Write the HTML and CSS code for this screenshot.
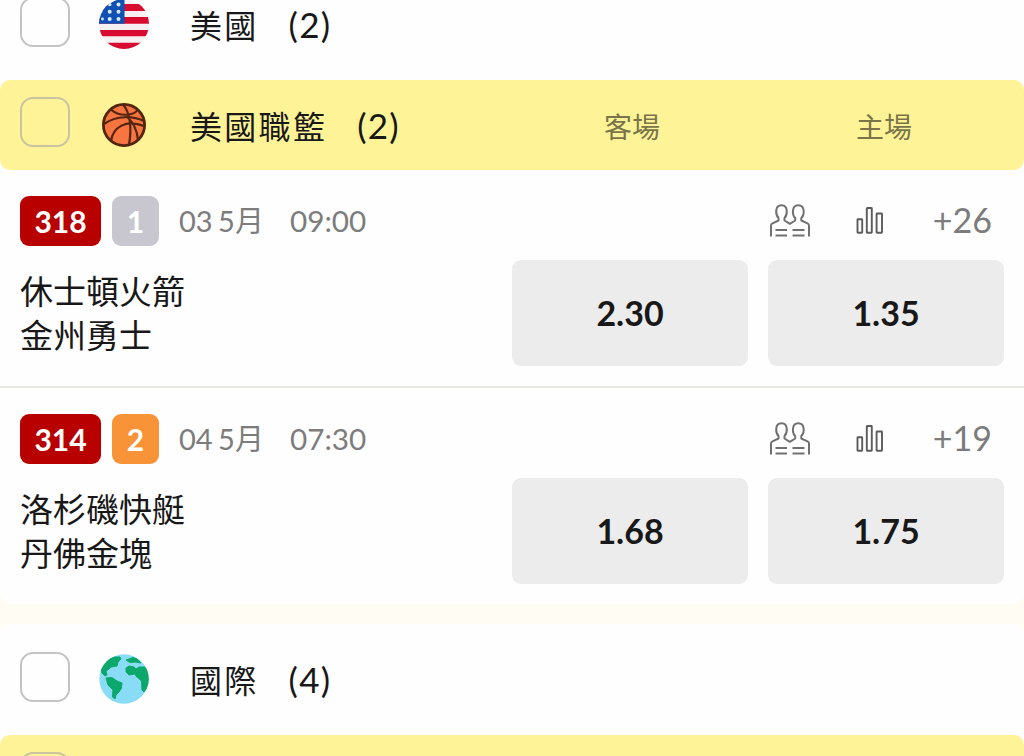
FILE: index.html
```html
<!DOCTYPE html>
<html lang="zh-Hant">
<head>
  <meta charset="UTF-8">
  <title>美國職籃</title>
  <meta name="viewport" content="width=device-width, initial-scale=1.0">
  <link rel="stylesheet" href="styles.css">
</head>
<body>
  <!-- shared match icons -->
  <svg class="sprite" width="0" height="0">
    <symbol id="people" viewBox="0 0 42 36">
      <g fill="none" stroke="#707070" stroke-width="2" stroke-linejoin="round">
        <path d="M2 33.500V22.500Q2 21 3.500 20.300L9.500 17.500V15C6.500 12 5.500 2.300 12.500 2.300S18.500 12 15.500 15V17.500L20.800 20.800L26.200 17.500V15C23.200 12 22.300 2.300 29.300 2.300S35.500 12 32.300 15V17.500L38.500 20.300Q40 21 40 22.500V33.500"/>
        <path d="M6.500 27H18M6.500 32.500H18M23.500 27H35.500M23.500 32.500H35.500"/>
      </g>
    </symbol>
    <symbol id="stats" viewBox="0 0 28 28">
      <g fill="none" stroke="#5c5c5c" stroke-width="1.900">
        <rect x="1.500" y="12.300" width="4.700" height="13.400" rx=".5"/>
        <rect x="10.800" y="1" width="5" height="24.700" rx=".5"/>
        <rect x="20.600" y="6.500" width="5.400" height="19.200" rx=".5"/>
      </g>
    </symbol>
  </svg>

  <section class="region region-first">
    <div class="region-header">
      <span class="checkbox"></span>
      <svg class="region-icon" viewBox="0 0 50 50">
        <clipPath id="round"><circle cx="25" cy="25" r="25"/></clipPath>
        <g clip-path="url(#round)">
          <rect width="50" height="50" fill="#f7f0f3"/>
          <path fill="#d80b30" d="M0 5H50V12H0ZM0 18H50V24.700H0ZM0 31H50V37.300H0ZM0 43.700H50V50H0Z"/>
          <rect width="25.500" height="24.700" fill="#0f52b4"/>
          <g fill="#dce8f8">
            <circle cx="19.500" cy="5.500" r="2"/><circle cx="19.500" cy="12.700" r="2"/><circle cx="19.500" cy="20" r="2"/>
            <circle cx="10.700" cy="5.500" r="1.800"/><circle cx="10.700" cy="12.700" r="2"/><circle cx="10.700" cy="20" r="2"/>
            <circle cx="3.500" cy="20" r="1.400"/>
          </g>
        </g>
      </svg>
      <h2>美國<span class="count">(2)</span></h2>
    </div>
    <div class="league-header">
      <span class="checkbox"></span>
      <svg class="region-icon" viewBox="0 0 50 50">
        <circle cx="25" cy="25" r="20.600" fill="#f87440" stroke="#54250f" stroke-width="2.800"/>
        <g fill="none" stroke="#54250f" stroke-width="2.200">
          <path d="M24 4.500C31 12 33 28 30 45M12 9.500C20 17 35 16 39 9.500M5 24C18 15 34 16 45 21M12 41C14 27 27 19 45 26M39 40C38 29 34 22 28 17"/>
        </g>
      </svg>
      <h2>美國職籃<span class="count">(2)</span></h2>
      <div class="columns">
        <span>客場</span>
        <span>主場</span>
      </div>
    </div>

    <div class="match">
      <div class="match-info">
        <div class="meta">
          <span class="badge badge-id">318</span>
          <span class="badge badge-grey">1</span>
          <span class="date">03 5月</span>
          <span class="time">09:00</span>
        </div>
        <div class="teams">
          <div>休士頓火箭</div>
          <div>金州勇士</div>
        </div>
      </div>
      <div class="match-odds">
        <div class="tools">
          <svg class="icon-people"><use href="#people"/></svg>
          <svg class="icon-stats"><use href="#stats"/></svg>
          <span class="more">+26</span>
        </div>
        <div class="odds">
          <button>2.30</button>
          <button>1.35</button>
        </div>
      </div>
    </div>

    <div class="match">
      <div class="match-info">
        <div class="meta">
          <span class="badge badge-id">314</span>
          <span class="badge badge-orange">2</span>
          <span class="date">04 5月</span>
          <span class="time">07:30</span>
        </div>
        <div class="teams">
          <div>洛杉磯快艇</div>
          <div>丹佛金塊</div>
        </div>
      </div>
      <div class="match-odds">
        <div class="tools">
          <svg class="icon-people"><use href="#people"/></svg>
          <svg class="icon-stats"><use href="#stats"/></svg>
          <span class="more">+19</span>
        </div>
        <div class="odds">
          <button>1.68</button>
          <button>1.75</button>
        </div>
      </div>
    </div>
  </section>

  <section class="region region-last">
    <div class="region-header">
      <span class="checkbox"></span>
      <svg class="region-icon" viewBox="0 0 50 50">
        <clipPath id="globe"><circle cx="25" cy="25" r="24.700"/></clipPath>
        <g clip-path="url(#globe)">
          <rect width="50" height="50" fill="#88dcf6"/>
          <g fill="#0ca86b" stroke="#0ca86b" stroke-linejoin="round">
            <path d="M2 17L3 12L8 5L15 3L21 3L22 5L19 8L18 12L12 13L10 15L7 17L8 21L6 22L3 19Z"/>
            <path d="M7 24L13 23.500L18 27L23 29L22.500 34L20 38L17 41L16 45L13.500 43L14 36L9 31Z"/>
            <path d="M27 6L34 3.500L38 5L42 9L36 8L31 8.500ZM27 14L30 12L35 13L37 15L40 13L46 13L50 19V31L45 38L43 36L42.500 27L37 22L36 20L30 21L27 18Z"/>
          </g>
        </g>
      </svg>
      <h2>國際<span class="count">(4)</span></h2>
    </div>
    <div class="league-header">
      <span class="checkbox"></span>
    </div>
  </section>
</body>
</html>
```

FILE: styles.css
```css
* {
  box-sizing: border-box;
}
html {
  overflow: hidden;
}
body {
  font-family: Lato, "Noto Sans CJK TC", sans-serif;
  background-color: #fffcf3;
  color: #181818;
  margin: 0;
  height: 756px;
  overflow: hidden;
}
.sprite {
  display: block;
}
.region {
  background-color: #fefefe;
  border-radius: 10px;
  margin-bottom: 20px;
}
/* list is scrolled a little past its first row */
.region-first {
  margin-top: -31px;
}
.region-last {
  height: 132px;
  margin-bottom: 0;
  border-radius: 10px 10px 0 0;
  overflow: hidden;
}
.region-header,
.league-header {
  display: flex;
  align-items: center;
  padding: 0 20px;
}
.region-header {
  height: 111px;
}
.league-header {
  height: 90px;
  background-color: #fef497;
  border-radius: 10px;
}
.checkbox {
  width: 50px;
  height: 50px;
  margin-bottom: 6px;
  border: 2px solid #c4c4c4;
  border-radius: 13px;
}
.league-header .checkbox {
  border-color: #c9c4a0;
}
.region-icon {
  width: 50px;
  height: 50px;
  margin: 0 41px 2px 29px;
}
.league-header .region-icon {
  margin-bottom: 0;
}
h2 {
  margin: 2px 0 0;
  font-size: 32px;
  font-weight: normal;
  letter-spacing: 2.3px;
  line-height: 44px;
}
.league-header h2 {
  margin-top: 4px;
}
.count {
  margin-left: 30px;
  font-size: 35px;
  letter-spacing: 1.2px;
  line-height: 1;
}
.columns {
  display: flex;
  gap: 16px;
  margin-left: auto;
  margin-right: 2px;
  margin-top: 2px;
  font-size: 28px;
  color: #79744a;
}
.columns span {
  width: 236px;
  text-align: center;
}
.match {
  display: flex;
  justify-content: space-between;
  height: 217px;
  padding: 26px 20px 0;
}
.match + .match {
  border-top: 2px solid #e6e6e2;
  margin-top: -1px;
  height: 218px;
}
.meta {
  display: flex;
  align-items: center;
  height: 50px;
  color: #7c7c7c;
  font-size: 29.7px;
}
.badge {
  height: 50px;
  border-radius: 9px;
  color: #fff;
  font-size: 30px;
  font-weight: bold;
  line-height: 50px;
  text-align: center;
}
.badge-id {
  width: 81px;
  margin-right: 11px;
  background-color: #b80000;
}
.badge-grey,
.badge-orange {
  width: 47px;
  margin-right: 20px;
}
.badge-grey {
  background-color: #c8c7cf;
}
.badge-orange {
  background-color: #f99338;
}
.date {
  width: 111px;
  font-size: 29px;
  word-spacing: -2px;
  line-height: 46px;
}
.time {
  margin-bottom: 2px;
}
.teams {
  margin-top: 23px;
  font-size: 33px;
  line-height: 44px;
}
.tools {
  display: flex;
  align-items: center;
  justify-content: flex-end;
  height: 50px;
  padding-right: 12px;
}
.icon-people {
  width: 42px;
  height: 36px;
  margin-right: 45px;
}
.icon-stats {
  width: 28px;
  height: 28px;
  margin-right: 49px;
}
.more {
  margin-bottom: 3px;
  color: #7c7c7c;
  font-size: 34px;
}
.odds {
  display: flex;
  gap: 20px;
  margin-top: 14px;
}
.odds button {
  width: 236px;
  height: 106px;
  padding: 0 0 1px;
  border: none;
  border-radius: 9px;
  background-color: #ececec;
  color: #181818;
  font-family: inherit;
  font-size: 34px;
  font-weight: bold;
}
```
